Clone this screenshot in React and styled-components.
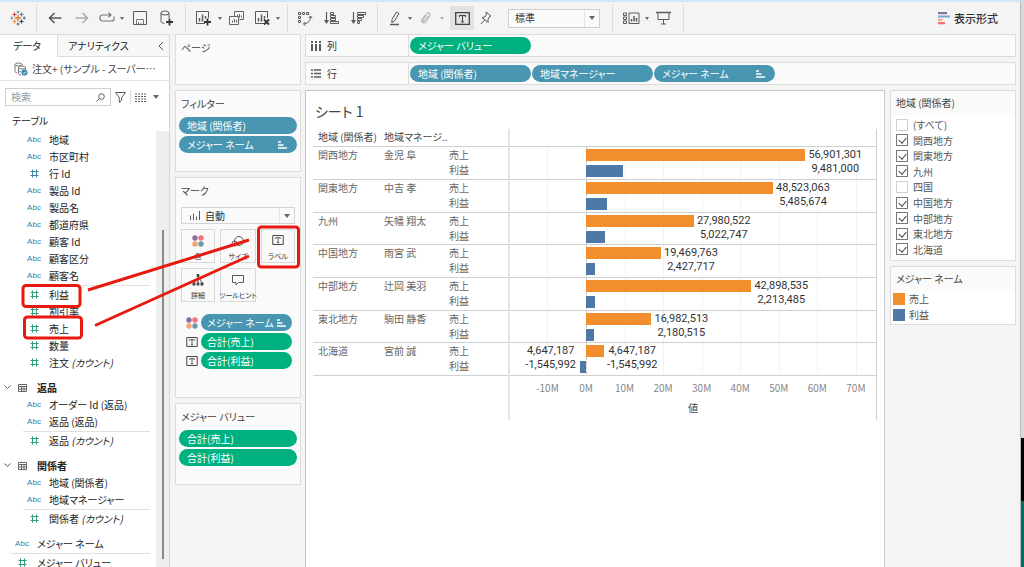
import React from "react";
import styled, { createGlobalStyle, css } from "styled-components";

const TREE = [
  { name: "地域", kind: "abc" },
  { name: "市区町村", kind: "abc" },
  { name: "行 Id", kind: "num", blue: true },
  { name: "製品 Id", kind: "abc" },
  { name: "製品名", kind: "abc" },
  { name: "都道府県", kind: "abc" },
  { name: "顧客 Id", kind: "abc" },
  { name: "顧客区分", kind: "abc" },
  { name: "顧客名", kind: "abc" },
  { kind: "line" },
  { name: "利益", kind: "num" },
  { name: "割引率", kind: "num" },
  { name: "売上", kind: "num" },
  { name: "数量", kind: "num" },
  { name: "注文", count: "(カウント)", kind: "num" },
  { name: "返品", kind: "table" },
  { name: "オーダー Id (返品)", kind: "abc" },
  { name: "返品 (返品)", kind: "abc" },
  { kind: "line" },
  { name: "返品", count: "(カウント)", kind: "num" },
  { name: "関係者", kind: "table" },
  { name: "地域 (関係者)", kind: "abc" },
  { name: "地域マネージャー", kind: "abc" },
  { kind: "line" },
  { name: "関係者", count: "(カウント)", kind: "num" },
  { name: "メジャー ネーム", kind: "abc", root: true, first: true },
  { kind: "line", root: true },
  { name: "メジャー バリュー", kind: "num", root: true },
];

const ROWS = [
  { region: "関西地方", manager: "金児 阜", sales: 56901301, profit: 9481000 },
  { region: "関東地方", manager: "中吉 孝", sales: 48523063, profit: 5485674 },
  { region: "九州", manager: "矢幡 翔太", sales: 27980522, profit: 5022747 },
  { region: "中国地方", manager: "雨宮 武", sales: 19469763, profit: 2427717 },
  { region: "中部地方", manager: "辻岡 美羽", sales: 42898535, profit: 2213485 },
  { region: "東北地方", manager: "駒田 静香", sales: 16982513, profit: 2180515 },
  { region: "北海道", manager: "宮前 誠", sales: 4647187, profit: -1545992 },
];

const REGIONS = [
  ["(すべて)", false],
  ["関西地方", true],
  ["関東地方", true],
  ["九州", true],
  ["四国", false],
  ["中国地方", true],
  ["中部地方", true],
  ["東北地方", true],
  ["北海道", true],
];

const TICKS = [-10, 0, 10, 20, 30, 40, 50, 60, 70];
const MIN = -19700000;
const MAX = 75200000;
const pos = (v) => ((v - MIN) / (MAX - MIN)) * 100;
const fmt = (v) => v.toLocaleString("en-US");

/* ---------- icons ---------- */

const Icon = ({ w = 16, h = 16, color = "#5a5a5a", sw = 1, children }) => (
  <svg width={w} height={h} viewBox={`0 0 ${w} ${h}`} fill="none" stroke={color} strokeWidth={sw} aria-hidden="true">
    {children}
  </svg>
);

const Logo = () => (
  <Icon w={16} h={16} sw={1.2}>
    <path d="M8 5v6M5 8h6" stroke="#e8762d" strokeWidth="1.5" />
    <path d="M4.5 2.5v4M2.5 4.5h4" stroke="#c7454b" />
    <path d="M11.5 2.5v4M9.5 4.5h4" stroke="#5b7fa6" />
    <path d="M4.5 9.5v4M2.5 11.5h4" stroke="#e8954b" />
    <path d="M11.5 9.5v4M9.5 11.5h4" stroke="#1f457e" />
    <path d="M8 .5v3M6.5 2h3M1.8 6.5v3M.3 8h3" stroke="#7199a6" />
    <path d="M8 12.5v3M6.5 14h3M14.2 6.5v3M12.7 8h3" stroke="#5b6591" />
  </Icon>
);

const Arrow = ({ back }) => (
  <Icon w={14} h={14} color={back ? "#555" : "#aaa"} sw={1.5}>
    <path d={back ? "M13.5 7H1.5M6.5 2L1.5 7l5 5" : "M.5 7h12M7.5 2l5 5-5 5"} />
  </Icon>
);

const Replay = () => (
  <Icon w={16} h={12} color="#777" sw={1.2}>
    <path d="M9 9H3.5C2 9 1 8 1 6.7V5.5C1 4 2 3 3.5 3H12M9.5.8L12 3 9.5 5.2M15 4.5V6.7C15 8 14 9 12.5 9H9" />
  </Icon>
);

const Save = () => (
  <Icon w={14} h={14}>
    <path d="M.5.5h13v13H.5z" />
    <path d="M3.5 13V8.5h7V13M5.5 11v2.5M7 13h2" stroke="#777" />
  </Icon>
);

const DbPlus = () => (
  <Icon w={14} h={16}>
    <ellipse cx="5" cy="3" rx="4" ry="2" />
    <path d="M1 3v8.5c0 1 1.5 1.8 3.5 1.8M9 3v5" />
    <path d="M9.5 8.5v7M6 12h7" stroke="#333" strokeWidth="1.8" />
  </Icon>
);

const SheetPlus = ({ clear }) => (
  <Icon w={17} h={16}>
    <path d="M10 13.5H1.5v-12h12V8" />
    <path d="M4.5 11.5V8M7.5 11.5V4.5M10.5 8.5V6" strokeWidth="1.5" />
    {clear ? (
      <path d="M10 9.5l5 5M15 9.5l-5 5" stroke="#333" strokeWidth="1.8" />
    ) : (
      <path d="M12.5 8.5v7M9 12h7" stroke="#333" strokeWidth="1.8" />
    )}
  </Icon>
);

const Duplicate = () => (
  <Icon w={16} h={15} color="#666">
    <path d="M5.5 5V.5h9v8h-4M.5 5.5h9v8h-9zM3.5 11.5V9.5M5.5 11.5V8M7.5 11.5V9M8.5 5V3.5M10.5 6.5V3M12.5 6.5V4.5" />
  </Icon>
);

const Swap = () => (
  <Icon w={16} h={15}>
    <path d="M1.5 1.5h2v2h-2zM5.5 1.5h2v2h-2zM9.5 1.5h2v2h-2zM1.5 5.5h2v2h-2zM1.5 9.5h2v2h-2z" />
    <path d="M13.5 5.5c0 4-2 7-7 7.5M11.8 7l1.7-2 1.7 2M8.5 11l-2 2 2 1.7" />
  </Icon>
);

const Sort = ({ desc }) => (
  <Icon w={16} h={14}>
    <path d="M2.5 1v11" strokeWidth="1.2" />
    <path d="M0 9h5L2.5 13z" fill="#5a5a5a" stroke="none" />
    {desc ? (
      <path d="M6.5 1.5h8v2h-8zM6.5 4.5h6v2h-6zM6.5 7.5h4v2h-4zM6.5 10.5h2v2h-2z" />
    ) : (
      <path d="M6.5 1.5h3v2h-3zM6.5 4.5h5v2h-5zM6.5 7.5h5v2h-5zM6.5 10.5h8v2h-8z" />
    )}
  </Icon>
);

const Highlighter = () => (
  <Icon w={12} h={16}>
    <path d="M3 9.5L7.5 2l2.5 1.5L5.5 11l-2.7 1.5z" />
    <path d="M1 14.5h9" strokeWidth="1.5" />
  </Icon>
);

const Clip = () => (
  <Icon w={12} h={14} color="#bbb" sw={1.2}>
    <path d="M8.5 4.5L4.5 10c-.8 1-2.3 0-1.6-1.2L7 2.5c1.3-1.8 4-.2 3 1.8L6 10.7c-1.5 2.3-5 .8-4.2-1.8L5 4" />
  </Icon>
);

const TextBox = ({ size = 15 }) => (
  <svg width={size} height={Math.round(size * 0.87)} viewBox="0 0 15 13" fill="none" stroke="#444" aria-hidden="true">
    <path d="M.7.7h13.6v11.6H.7z" strokeWidth="1.3" />
    <path d="M4.5 5V3.5h6V5M7.5 3.5v6.5M6 10h3" strokeWidth="1.1" />
  </svg>
);

const Pin = () => (
  <Icon w={12} h={14}>
    <path d="M6 1l5 4-1.5.5L8 8.5l.2 3L2 6.5l3-.5 1.5-3zM4.5 9L1 13" />
  </Icon>
);

const ShowCards = () => (
  <Icon w={17} h={13}>
    <path d="M.5 1h3v2.5h-3zM.5 5h3v2.5h-3zM.5 9h3v2.5h-3zM6 1h10v10.5H6z" />
    <path d="M8.5 9.5V7M11 9.5V4M13.5 9.5V6" strokeWidth="1.5" />
  </Icon>
);

const Present = () => (
  <Icon w={15} h={14}>
    <path d="M0 1.5h15" strokeWidth="1.5" />
    <path d="M2 1.5v7h11v-7M7.5 8.5v4.5M5 13h5" />
  </Icon>
);

const ShowMe = () => (
  <svg width="12" height="13" viewBox="0 0 12 13" aria-hidden="true">
    <path fill="#8a6fa0" d="M0 0h9v2.2H0z" />
    <path fill="#7fa8d0" d="M0 3.5h12v2H0z" />
    <path fill="#f5a66f" d="M0 6.8h4.5v2H0z" />
    <path fill="#f7707c" d="M0 10h7v2.3H0z" />
  </svg>
);

const Hash = ({ blue }) => (
  <Icon w={9} h={9} color={blue ? "#3f87a6" : "#2f9f78"}>
    <path d="M2.5.5v8M6.5.5v8M.5 2.5h8M.5 6.5h8" />
  </Icon>
);

const PillSort = () => (
  <Icon w={9} h={8} color="#fff" sw={1.4}>
    <path d="M0 1h3M0 4h5.5M0 7h9" />
  </Icon>
);

const Dots = ({ size = 12 }) => (
  <svg width={size} height={size} viewBox="0 0 12 12" aria-hidden="true">
    <circle cx="3" cy="3" r="2.7" fill="#8a6fa0" />
    <circle cx="9" cy="3" r="2.7" fill="#f7707c" />
    <circle cx="3" cy="9" r="2.7" fill="#f5a66f" />
    <circle cx="9" cy="9" r="2.7" fill="#6a9aa8" />
  </svg>
);

/* ---------- small parts ---------- */

const ToolCaret = ({ off }) => (
  <Caret type="button" aria-label="メニュー" $off={off} />
);

const Field = ({ item }) => {
  if (item.kind === "line") return <Line $root={item.root} />;
  if (item.kind === "table")
    return (
      <TableHead>
        <Icon w={7} h={5}><path d="M.5.5l3 3 3-3" /></Icon>
        <Icon w={9} h={8} color="#666"><path d="M.5.5h8v7h-8zM.5 2.5h8M.5 5h8M3.5 2.5v5M6 2.5v5" /></Icon>
        <b>{item.name}</b>
      </TableHead>
    );
  return (
    <FieldRow $root={item.root} $first={item.first}>
      <FieldKind>{item.kind === "abc" ? "Abc" : <Hash blue={item.blue} />}</FieldKind>
      <span>{item.name} {item.count && <i>{item.count}</i>}</span>
    </FieldRow>
  );
};

const Marks = ({ row }) => (
  <Plot>
    {TICKS.map((t) => (
      <GridLine key={t} $zero={t === 0} style={{ left: pos(t * 1000000) + "%" }} />
    ))}
    {[row.sales, row.profit].map((v, i) => (
      <BarLane key={i}>
        <Bar
          $color={i ? "#4e79a7" : "#f28e2b"}
          style={{ marginLeft: pos(Math.min(v, 0)) + "%", width: pos(Math.abs(v)) - pos(0) + "%" }}
        />
      </BarLane>
    ))}
    <BarLabel style={{ left: pos(row.sales) + "%" }}>
      {fmt(row.sales)}<br />{fmt(row.profit)}
    </BarLabel>
    {row.profit < 0 && (
      <BarLabel style={{ right: 100 - pos(row.profit) + "%" }}>
        {fmt(row.sales)}<br />{fmt(row.profit)}
      </BarLabel>
    )}
  </Plot>
);

export default function App() {
  return (
    <Desktop>
      <GlobalStyle />
      <Window>
        <Toolbar>
          <Tool type="button" $w={36} aria-label="スタート"><Logo /></Tool>
          <Divider $r={5} />
          <Tool type="button" $w={26} aria-label="元に戻す"><Arrow back /></Tool>
          <Tool type="button" $w={28} aria-label="やり直し"><Arrow /></Tool>
          <Tool type="button" $w={22} aria-label="リプレイ"><Replay /></Tool>
          <ToolCaret />
          <Tool type="button" $w={28} aria-label="保存"><Save /></Tool>
          <Tool type="button" $w={26} aria-label="新しいデータ ソース"><DbPlus /></Tool>
          <Divider $l={5} $r={4} />
          <Tool type="button" $w={26} aria-label="新しいワークシート"><SheetPlus /></Tool>
          <ToolCaret />
          <Tool type="button" $w={26} aria-label="複製"><Duplicate /></Tool>
          <Tool type="button" $w={24} aria-label="クリア"><SheetPlus clear /></Tool>
          <ToolCaret />
          <Divider $l={5} $r={4} />
          <Tool type="button" $w={26} aria-label="行と列の交換"><Swap /></Tool>
          <Tool type="button" $w={28} aria-label="昇順"><Sort /></Tool>
          <Tool type="button" $w={26} aria-label="降順"><Sort desc /></Tool>
          <Divider $l={5} $r={6} />
          <Tool type="button" $w={22} aria-label="ハイライト"><Highlighter /></Tool>
          <ToolCaret />
          <Tool type="button" $w={24} aria-label="グループ"><Clip /></Tool>
          <ToolCaret off />
          <Tool type="button" $w={24} $active aria-label="ラベル表示"><TextBox /></Tool>
          <Tool type="button" $w={24} aria-label="固定"><Pin /></Tool>
          <FitBox>
            <select aria-label="表示サイズ"><option>標準</option></select>
            <CaretCell />
          </FitBox>
          <Divider $l={12} $r={6} />
          <Tool type="button" $w={24} aria-label="カードの表示"><ShowCards /></Tool>
          <ToolCaret />
          <Tool type="button" $w={24} aria-label="プレゼンテーション"><Present /></Tool>
          <Divider $l={8} $r={0} />
          <ShowMeButton type="button"><ShowMe />表示形式</ShowMeButton>
        </Toolbar>

        <Body>
          <DataPane>
            <Tabs>
              <Tab type="button" $on>データ</Tab>
              <Tab type="button">
                アナリティクス
                <Icon w={6} h={10}><path d="M5 1L1 5l4 4" /></Icon>
              </Tab>
            </Tabs>
            <Source>
              <Icon w={14} h={14} color="#777">
                <ellipse cx="4.5" cy="2.5" rx="3.5" ry="1.5" />
                <path d="M1 2.5v7c0 .8 1 1.3 2.5 1.5M8 2.5v1" />
                <ellipse cx="8" cy="5.5" rx="3.5" ry="1.5" />
                <path d="M4.5 5.5v6c0 .8 1 1.3 2.5 1.5M11.5 5.5v2M4.5 8.5c0 .8 1.5 1.5 3 1.5" />
                <circle cx="10.5" cy="10.5" r="3" fill="#2f86ad" stroke="none" />
                <path d="M9 10.5l1.2 1.2 2-2.3" stroke="#fff" />
              </Icon>
              注文+ (サンプル - スーパー…
            </Source>
            <SearchRow>
              <SearchBox>
                <input type="text" placeholder="検索" aria-label="検索" />
                <Icon w={9} h={9}><circle cx="5.5" cy="3.5" r="2.8" /><path d="M3.5 5.5L.5 8.5" /></Icon>
              </SearchBox>
              <Icon w={11} h={11}><path d="M.5.5h10L6.7 5.5v3L4.3 10.3V5.5z" /></Icon>
              <SearchSplit />
              <Icon w={11} h={9} sw={1.2}><path d="M0 1h11M0 3.5h11M0 6h11M0 8.5h11" strokeDasharray="2 1" /></Icon>
              <Triangle />
            </SearchRow>
            <TreeTitle>テーブル</TreeTitle>
            <TreeWrap>
              <Tree>{TREE.map((item, i) => <Field key={i} item={item} />)}</Tree>
              <Track><i /></Track>
            </TreeWrap>
          </DataPane>

          <Cards>
            <Card $h={51}><CardTitle>ページ</CardTitle></Card>
            <Card $h={82}>
              <CardTitle>フィルター</CardTitle>
              <PillStack>
                <Pill type="button">地域 (関係者)</Pill>
                <Pill type="button">メジャー ネーム<PillSort /></Pill>
              </PillStack>
            </Card>
            <Card $h={221}>
              <CardTitle>マーク</CardTitle>
              <MarkType>
                <Icon w={10} h={9}><path d="M.5 4.5V9M3.5 2.5V9M6.5 5.5V9M9.5 0V9" /></Icon>
                <select aria-label="マーク タイプ"><option>自動</option></select>
                <CaretCell />
              </MarkType>
              <MarkGrid>
                <MarkButton type="button"><Dots />色</MarkButton>
                <MarkButton type="button">
                  <Icon w={14} h={12}><circle cx="8" cy="6" r="4.5" /><circle cx="3.5" cy="8.5" r="2.5" /></Icon>
                  サイズ
                </MarkButton>
                <MarkButton type="button"><TextBox size={12} />ラベル</MarkButton>
                <MarkButton type="button">
                  <Icon w={12} h={12}>
                    <path d="M6 2v3M2 9l2-4h4l2 4M6 5v4" />
                    <path d="M4.7 0h2.6v3H4.7zM.5 8.5h3v3h-3zM4.7 8.5h2.6v3H4.7zM8.5 8.5h3v3h-3z" fill="#444" stroke="none" />
                  </Icon>
                  詳細
                </MarkButton>
                <MarkButton type="button">
                  <Icon w={12} h={12}><path d="M.5 1.5h11v7H6.5L4 11V8.5H.5z" /></Icon>
                  ツールヒント
                </MarkButton>
              </MarkGrid>
              <MarkList>
                <li><Dots /><Pill type="button">メジャー ネーム<PillSort /></Pill></li>
                <li><TextBox size={12} /><Pill type="button" $green>合計(売上)</Pill></li>
                <li><TextBox size={12} /><Pill type="button" $green>合計(利益)</Pill></li>
              </MarkList>
            </Card>
            <Card $h={82}>
              <CardTitle>メジャー バリュー</CardTitle>
              <PillStack>
                <Pill type="button" $green>合計(売上)</Pill>
                <Pill type="button" $green>合計(利益)</Pill>
              </PillStack>
            </Card>
          </Cards>

          <Main>
            <Shelf>
              <ShelfName>
                <Icon w={10} h={10} sw={2}><path d="M1 0v2M1 3v7M5 0v2M5 3v7M9 0v2M9 3v7" /></Icon>
                列
              </ShelfName>
              <Pill type="button" $green>メジャー バリュー</Pill>
            </Shelf>
            <Shelf>
              <ShelfName>
                <Icon w={10} h={9} sw={1.4}><path d="M0 1h2M3 1h7M0 4.5h2M3 4.5h7M0 8h2M3 8h7" /></Icon>
                行
              </ShelfName>
              <Pill type="button">地域 (関係者)</Pill>
              <Pill type="button">地域マネージャー</Pill>
              <Pill type="button">メジャー ネーム<PillSort /></Pill>
            </Shelf>
            <Work>
              <Sheet>
                <h1>シート 1</h1>
                <Viz>
                  <colgroup>
                    <col width="66" /><col width="65" /><col width="65" /><col />
                  </colgroup>
                  <thead>
                    <tr><th>地域 (関係者)</th><th>地域マネージ..</th><th /><th /></tr>
                  </thead>
                  <tbody>
                    {ROWS.map((row) => (
                      <tr key={row.region}>
                        <td>{row.region}</td>
                        <td>{row.manager}</td>
                        <td>売上<br />利益</td>
                        <td><Marks row={row} /></td>
                      </tr>
                    ))}
                  </tbody>
                  <tfoot>
                    <tr>
                      <td colSpan={3} />
                      <td>
                        <Axis>
                          {TICKS.map((t) => (
                            <span key={t} style={{ left: pos(t * 1000000) + "%" }}>{t}M</span>
                          ))}
                        </Axis>
                        <AxisTitle>値</AxisTitle>
                      </td>
                    </tr>
                  </tfoot>
                </Viz>
              </Sheet>
              <Side>
                <SideCard>
                  <h2>地域 (関係者)</h2>
                  <CheckList>
                    {REGIONS.map(([name, on]) => (
                      <label key={name}><input type="checkbox" defaultChecked={on} />{name}</label>
                    ))}
                  </CheckList>
                </SideCard>
                <SideCard>
                  <h2>メジャー ネーム</h2>
                  <Legend>
                    <LegendItem $color="#f28e2b">売上</LegendItem>
                    <LegendItem $color="#4e79a7">利益</LegendItem>
                  </Legend>
                </SideCard>
              </Side>
            </Work>
          </Main>
        </Body>
      </Window>
      <DesktopEdge><i /><i /><i /></DesktopEdge>

      {/* hand-drawn callouts over the window */}
      <Callouts width="320" height="360" viewBox="0 0 320 360" aria-hidden="true">
        <rect x="23" y="285.5" width="57" height="21" rx="3" />
        <rect x="24.5" y="317" width="57" height="21" rx="3" />
        <rect x="258.5" y="227" width="40" height="40" rx="3" />
        <path d="M88 290L249 240M95 325.5L249 256" />
      </Callouts>
    </Desktop>
  );
}

/* ---------- styles ---------- */

const GlobalStyle = createGlobalStyle`
  * { box-sizing: border-box; }
  body {
    margin: 0;
    overflow: hidden;
    color: #333;
    font-family: "Noto Sans CJK JP", sans-serif;
    font-size: 10px;
    line-height: 16px;
    font-feature-settings: "palt";
  }
  button, input, select {
    font: inherit;
    font-feature-settings: inherit;
    color: inherit;
    margin: 0;
    padding: 0;
    border: 0;
    background: none;
  }
  select { appearance: none; flex: 1; min-width: 0; outline: none; }
  svg { flex: none; display: block; }
  h1, h2, ul { margin: 0; padding: 0; font-weight: 400; list-style: none; }
`;

const Desktop = styled.div`
  position: relative;
  display: flex;
  height: 100vh;
`;

const Window = styled.div`
  flex: 1;
  min-width: 0;
  display: flex;
  flex-direction: column;
  background: #f4f4f4;
  border-top: 2px solid #cfe6fa;
  border-right: 1px solid #b9b9b9;
`;

const DesktopEdge = styled.div`
  width: 3px;
  display: flex;
  flex-direction: column;

  i { flex: 438; background: #dadada; }
  i + i { flex: 63; background: #000; }
  i + i + i { flex: 66; background: #006e6e; }
`;

const Toolbar = styled.header`
  display: flex;
  align-items: center;
  height: 32px;
  flex: none;
`;

const Tool = styled.button`
  display: flex;
  align-items: center;
  justify-content: center;
  flex: none;
  width: ${(props) => props.$w}px;
  height: 24px;
  margin-left: ${(props) => (props.$active ? 4 : 0)}px;
  background: ${(props) => (props.$active ? "#e2e2e2" : "transparent")};
`;

const triangle = css`
  content: "";
  border: 3px solid transparent;
  border-top: 4px solid #666;
  border-bottom: 0;
`;

const Caret = styled.button`
  display: flex;
  align-items: center;
  justify-content: center;
  flex: none;
  width: 8px;
  height: 24px;
  opacity: ${(props) => (props.$off ? 0.5 : 1)};

  &::after { ${triangle} border-width: 3px 2px 0; }
`;

const Triangle = styled.i`
  &::after { ${triangle} display: block; }
`;

const Divider = styled.i`
  width: 1px;
  height: 28px;
  flex: none;
  background: #dcdcdc;
  margin: 0 ${(props) => props.$r || 0}px 0 ${(props) => props.$l || 0}px;
`;

const CaretCell = styled.i`
  width: 15px;
  align-self: stretch;
  display: flex;
  align-items: center;
  justify-content: center;
  border-left: 1px solid #e4e4e4;
  pointer-events: none;

  &::after { ${triangle} }
`;

const FitBox = styled.div`
  display: flex;
  align-items: center;
  width: 92px;
  height: 19px;
  margin-left: 10px;
  padding-left: 6px;
  border: 1px solid #cfcfcf;
  background: #fafafa;
`;

const ShowMeButton = styled.button`
  display: flex;
  align-items: center;
  gap: 4px;
  margin-left: auto;
  margin-right: 22px;
  font-size: 11px;
  font-weight: 500;
`;

const Body = styled.div`
  flex: 1;
  min-height: 0;
  display: flex;
`;

const DataPane = styled.aside`
  width: 170px;
  flex: none;
  display: flex;
  flex-direction: column;
  background: #fff;
  border-top: 1px solid #dcdcdc;
  border-right: 1px solid #d4d4d4;
`;

const Tabs = styled.div`
  display: flex;
  height: 22px;
  flex: none;
`;

const Tab = styled.button`
  display: flex;
  align-items: center;
  justify-content: space-between;
  flex: ${(props) => (props.$on ? "0 0 57px" : "1")};
  padding: 0 5px 0 ${(props) => (props.$on ? 13 : 10)}px;
  color: #222;
  ${(props) => !props.$on && css`
    background: #f7f7f7;
    border-left: 1px solid #dcdcdc;
    border-bottom: 1px solid #dcdcdc;
  `}
`;

const Source = styled.div`
  display: flex;
  align-items: center;
  gap: 4px;
  height: 24px;
  flex: none;
  padding-left: 14px;
  color: #444;
  white-space: nowrap;
  overflow: hidden;
  border-bottom: 1px solid #e2e2e2;
`;

const SearchRow = styled.div`
  display: flex;
  align-items: center;
  gap: 4px;
  flex: none;
  padding: 7px 10px 7px 5px;

  ${Triangle} { margin-left: 3px; }
`;

const SearchBox = styled.label`
  display: flex;
  align-items: center;
  flex: 1;
  height: 18px;
  padding: 0 5px;
  border: 1px solid #cfcfcf;

  input { flex: 1; width: 0; outline: none; }
  input::placeholder { color: #999; }
`;

const SearchSplit = styled.i`
  width: 1px;
  height: 14px;
  background: #d8d8d8;
`;

const TreeTitle = styled.div`
  flex: none;
  padding-left: 12px;
  height: 18px;
  color: #222;
`;

const TreeWrap = styled.div`
  flex: 1;
  min-height: 0;
  display: flex;
`;

const Tree = styled.div`
  flex: 1;
  overflow: hidden;
  white-space: nowrap;
  color: #222;
`;

const FieldRow = styled.div`
  display: flex;
  align-items: center;
  height: 17px;
  padding-left: ${(props) => (props.$root ? 11 : 23)}px;
  margin-top: ${(props) => (props.$first ? 8 : 0)}px;
`;

const FieldKind = styled.span`
  display: flex;
  justify-content: center;
  width: 22px;
  margin-right: 4px;
  color: #2f7fa3;
  font-family: "Liberation Sans", sans-serif;
  font-size: 8px;
`;

const TableHead = styled.div`
  display: flex;
  align-items: center;
  height: 17px;
  margin-top: 8px;
  padding-left: 4px;

  b { margin-left: 10px; }
  svg + svg { margin-left: 7px; }
`;

const Line = styled.hr`
  border: 0;
  height: 1px;
  margin: 1px 6px 0 ${(props) => (props.$root ? 11 : 23)}px;
  background: #e0e0e0;
`;

const Track = styled.div`
  width: 13px;
  padding: 99px 5px 8px 6px;
  background: #eee;

  i { display: block; height: 100%; background: #8a8a8a; }
`;

const Cards = styled.section`
  width: 135px;
  flex: none;
  display: flex;
  flex-direction: column;
  gap: 5px;
  padding: 0 4px 0 5px;
`;

const Card = styled.div`
  height: ${(props) => props.$h}px;
  flex: none;
  padding: 5px 3px;
  background: #fafafa;
  border: 1px solid #dcdcdc;
`;

const CardTitle = styled.h2`
  padding: 0 2px;
  font-size: 10px;
  color: #444;
`;

const PillStack = styled.div`
  display: flex;
  flex-direction: column;
  gap: 2px;
  margin-top: 5px;
`;

const Pill = styled.button`
  display: flex;
  align-items: center;
  justify-content: space-between;
  height: 17px;
  padding: 0 10px 0 8px;
  border-radius: 9px;
  white-space: nowrap;
  color: #fff;
  background: ${(props) => (props.$green ? "#00b180" : "#4996b2")};
`;

const MarkType = styled.div`
  display: flex;
  align-items: center;
  gap: 5px;
  height: 17px;
  margin: 8px 2px 0;
  padding-left: 8px;
  border: 1px solid #d4d4d4;
`;

const MarkGrid = styled.div`
  display: grid;
  grid-template-columns: 34px 36px 34px;
  justify-content: space-between;
  gap: 5px;
  margin: 5px 2px 0;
`;

const MarkButton = styled.button`
  display: flex;
  flex-direction: column;
  align-items: center;
  justify-content: space-between;
  height: 34px;
  padding: 5px 0 0;
  border: 1px solid #d8d8d8;
  font-size: 7px;
  line-height: 12px;
  white-space: nowrap;
`;

const MarkList = styled.ul`
  display: flex;
  flex-direction: column;
  gap: 2px;
  margin: 12px 5px 0 7px;

  li { display: flex; align-items: center; gap: 3px; }
  ${Pill} { flex: 1; min-width: 0; padding: 0 6px; }
`;

const Main = styled.main`
  flex: 1;
  min-width: 0;
  display: flex;
  flex-direction: column;
  gap: 5px;
  padding-right: 4px;
`;

const Shelf = styled.div`
  display: flex;
  align-items: center;
  gap: 1px;
  height: 23px;
  flex: none;
  background: #fafafa;
  border: 1px solid #dcdcdc;

  ${Pill} { width: 121px; }
`;

const ShelfName = styled.div`
  display: flex;
  align-items: center;
  gap: 6px;
  width: 103px;
  height: 100%;
  padding-left: 5px;
  border-right: 1px solid #dcdcdc;
`;

const Work = styled.div`
  flex: 1;
  min-height: 0;
  display: flex;
  gap: 5px;
`;

const Sheet = styled.section`
  flex: 1;
  min-width: 0;
  padding: 8px 7px 0;
  background: #fff;
  border: 1px solid #c6c6c6;
  border-bottom: 0;

  h1 { padding-left: 2px; font-size: 14px; line-height: 24px; color: #444; }
`;

const Viz = styled.table`
  width: 100%;
  margin-top: 6px;
  table-layout: fixed;
  border-collapse: collapse;
  color: #666;

  th { height: 17px; padding: 0 0 0 5px; font-weight: 400; text-align: left; color: #444; white-space: nowrap; }
  td { padding: 0 0 0 5px; vertical-align: top; line-height: 15px; }
  tr { border-bottom: 1px solid #d0d0d0; }
  tbody tr { height: 33px; }
  tbody tr:nth-child(3n) { height: 32px; }
  tfoot tr { border: 0; height: 45px; }
  th:last-child, td:last-child { padding: 0; border-left: 2px solid #e4e4e4; border-right: 1px solid #d0d0d0; }
`;

const Plot = styled.div`
  position: relative;
  height: 31px;
  padding-top: 2px;
`;

const GridLine = styled.i`
  position: absolute;
  top: 0;
  bottom: 0;
  border-left: 1px ${(props) => (props.$zero ? "dashed #c8c8c8" : "solid #f2f2f2")};
`;

const BarLane = styled.div`
  position: relative;
  height: 16px;
`;

const Bar = styled.div`
  height: 12px;
  background: ${(props) => props.$color};
`;

const BarLabel = styled.span`
  position: absolute;
  top: 1px;
  padding: 0 4px 0 3px;
  font-family: Roboto, sans-serif;
  font-size: 11px;
  line-height: 14px;
  text-align: center;
  color: #333;
`;

const Axis = styled.div`
  position: relative;
  height: 24px;
  color: #888;

  span { position: absolute; top: 4px; transform: translateX(-50%); }
`;

const AxisTitle = styled.div`
  text-align: center;
  color: #444;
`;

const Side = styled.aside`
  width: 126px;
  flex: none;
  display: flex;
  flex-direction: column;
  gap: 5px;
`;

const SideCard = styled.div`
  background: #fff;
  border: 1px solid #dcdcdc;

  h2 { height: 24px; padding-left: 5px; font-size: 10px; line-height: 24px; background: #fafafa; color: #444; }
`;

const CheckList = styled.div`
  display: grid;
  grid-auto-rows: 1fr;
  height: 140px;
  margin: 2px 0 3px;
  color: #555;
  line-height: 15px;

  label { display: flex; align-items: center; gap: 5px; padding-left: 5px; }
  input {
    appearance: none;
    display: flex;
    justify-content: center;
    width: 12px;
    height: 12px;
    padding-top: 1px;
    border: 1px solid #d0d0d0;
    background: #fff;
  }
  input:checked { border-color: #777; }
  input:checked::after {
    content: "";
    width: 4px;
    height: 6px;
    border: solid #444;
    border-width: 0 1px 1px 0;
    transform: rotate(40deg);
  }
`;

const Legend = styled.ul`
  padding: 0 2px 1px;
  color: #555;
`;

const LegendItem = styled.li`
  display: flex;
  align-items: center;
  gap: 4px;

  &::before {
    content: "";
    width: 12px;
    height: 12px;
    background: ${(props) => props.$color};
  }
`;

const Callouts = styled.svg`
  position: absolute;
  top: 0;
  left: 0;
  pointer-events: none;
  fill: none;
  stroke: #e8190f;
  stroke-width: 3;
`;
